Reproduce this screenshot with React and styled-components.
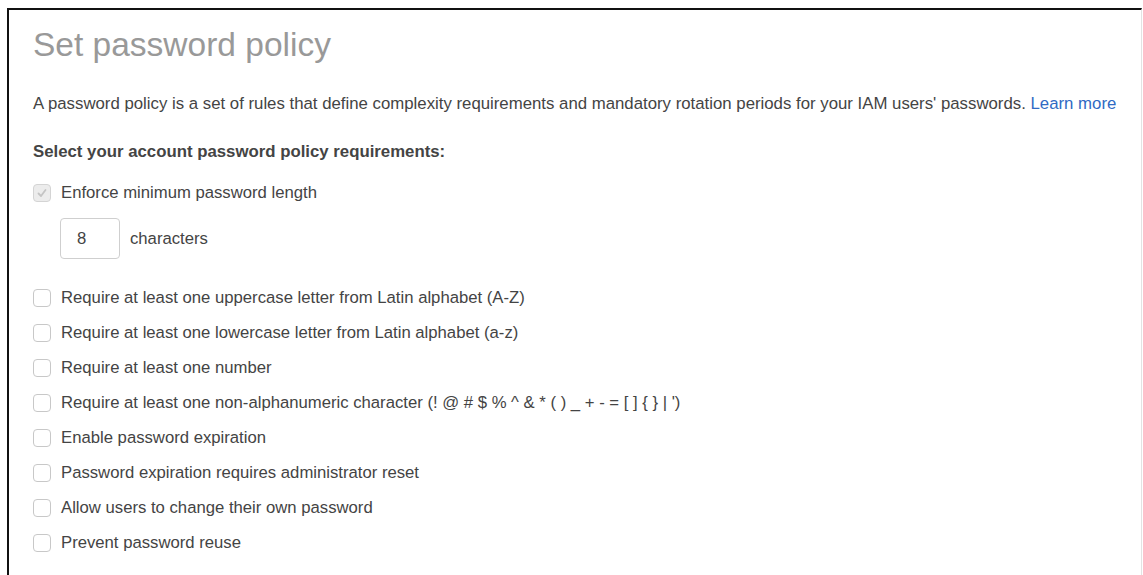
import React from "react";
import styled, { createGlobalStyle } from "styled-components";

const Global = createGlobalStyle`
  html, body { margin: 0; padding: 0; background: #fff; overflow: hidden; }
  body { font-family: "Liberation Sans", Arial, sans-serif; color: #444; }
`;

const Frame = styled.div`
  box-sizing: border-box;
  margin: 8px 0 0 7px;
  width: 1135px;
  height: 575px;
  border-top: 2px solid #111;
  border-left: 2px solid #111;
  border-right: 1px solid #e3e3e3;
  padding: 15px 0 0 24px;
`;

const Title = styled.h1`
  margin: 0;
  font-size: 33.5px;
  font-weight: 400;
  line-height: 40px;
  color: #999;
`;

const Intro = styled.p`
  margin: 29px 0 0;
  font-size: 16.8px;
  line-height: 20px;
  color: #444;
`;

const Link = styled.a`
  color: #2f6ac4;
  text-decoration: none;
`;

const Heading = styled.h2`
  margin: 28px 0 0;
  font-size: 16.8px;
  font-weight: 700;
  line-height: 20px;
  color: #444;
`;

const Options = styled.div`
  display: flex;
  flex-direction: column;
  margin-top: 13px;
`;

const Row = styled.label`
  display: flex;
  align-items: center;
  gap: 10px;
  height: 35.1px;
  font-size: 16.7px;
  color: #444;
`;

const Box = styled.span`
  box-sizing: border-box;
  width: 18px;
  height: 18px;
  border: 1px solid ${(p) => (p.$disabled ? "#d4d4d4" : "#c8c8c8")};
  border-radius: 4px;
  background: ${(p) => (p.$disabled ? "#ececec" : "#fff")};
  display: flex;
  align-items: center;
  justify-content: center;
  flex: none;
`;

const LengthRow = styled.div`
  display: flex;
  align-items: center;
  gap: 10px;
  margin: 8px 0 21px 27px;
  font-size: 16.7px;
  color: #444;
`;

const LengthInput = styled.div`
  box-sizing: border-box;
  width: 60px;
  height: 41px;
  border: 1px solid #cfcfcf;
  border-radius: 4px;
  padding-left: 16px;
  display: flex;
  align-items: center;
  font-size: 16.7px;
  color: #444;
`;

function Checkbox({ checked, disabled }) {
  return (
    <Box $disabled={disabled}>
      {checked && (
        <svg width="12" height="12" viewBox="0 0 12 12">
          <path d="M2.5 6.5 L5 9 L9.5 3" fill="none" stroke="#c4c4c4" strokeWidth="1.8" strokeLinecap="round" strokeLinejoin="round" />
        </svg>
      )}
    </Box>
  );
}

const rules = [
  "Require at least one uppercase letter from Latin alphabet (A-Z)",
  "Require at least one lowercase letter from Latin alphabet (a-z)",
  "Require at least one number",
  "Require at least one non-alphanumeric character (! @ # $ % ^ & * ( ) _ + - = [ ] { } | ')",
  "Enable password expiration",
  "Password expiration requires administrator reset",
  "Allow users to change their own password",
  "Prevent password reuse",
];

export default function App() {
  return (
    <>
      <Global />
      <Frame>
        <Title>Set password policy</Title>
        <Intro>
          A password policy is a set of rules that define complexity requirements and mandatory rotation periods for
          your IAM users' passwords. <Link href="#">Learn more</Link>
        </Intro>
        <Heading>Select your account password policy requirements:</Heading>
        <Options>
          <Row>
            <Checkbox checked disabled />
            Enforce minimum password length
          </Row>
          <LengthRow>
            <LengthInput>8</LengthInput>
            characters
          </LengthRow>
          {rules.map((r) => (
            <Row key={r}>
              <Checkbox />
              {r}
            </Row>
          ))}
        </Options>
      </Frame>
    </>
  );
}
